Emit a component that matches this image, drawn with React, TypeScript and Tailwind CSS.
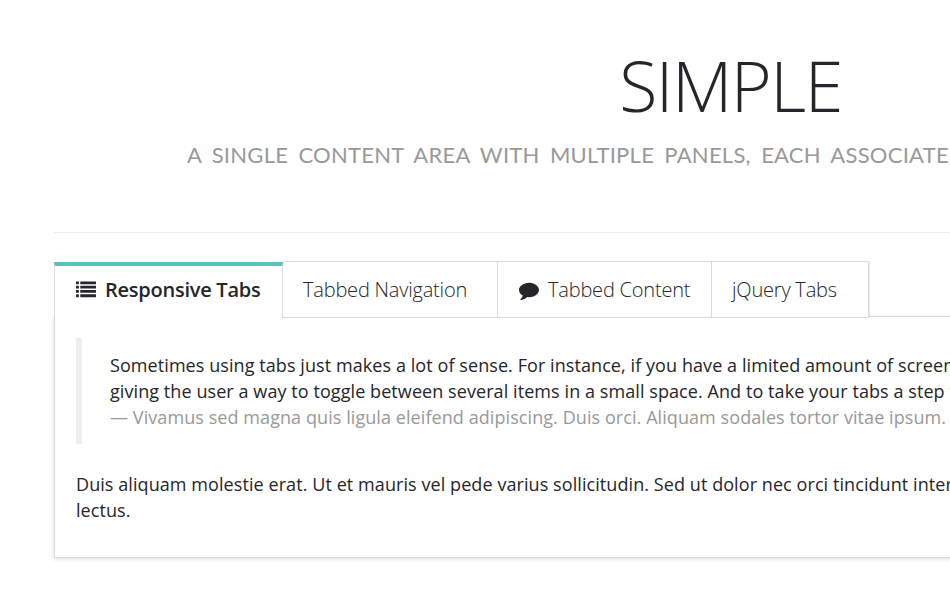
import type { ReactNode } from "react";

function ListIcon() {
  return (
    <svg viewBox="0 0 1792 1792" className="mr-[9px] size-5 shrink-0" fill="currentColor">
      {[128, 512, 896, 1280].map((y) => (
        <g key={y}>
          <rect x="0" y={y} width="256" height="256" rx="32" />
          <rect x="384" y={y} width="1408" height="256" rx="32" />
        </g>
      ))}
    </svg>
  );
}

function CommentIcon() {
  return (
    <svg viewBox="0 0 1792 1792" className="mr-[9px] size-5 shrink-0" fill="currentColor">
      <path d="M1792 896q0 174-120 321.5t-326 233-450 85.5q-70 0-145-8-198 175-460 242-49 14-114 22-17 2-30.5-9t-17.5-29v-1q-3-4-.5-12t2-10 4.5-9.5l6-9 7-8.5 8-9q7-8 31-34.5t34.5-38 31-39.5 32.5-51 27-59 26-76q-157-89-247.5-220t-90.5-281q0-130 71-248.5t191-204.5 286-136.5 348-50.5q244 0 450 85.5t326 233 120 321.5z" />
    </svg>
  );
}

function Tab({ className, children }: { className: string; children: ReactNode }) {
  return (
    <li className={`flex h-[57px] items-center border border-[#d9dbdc] bg-white text-xl font-light tracking-[-0.2px] ${className}`}>
      {children}
    </li>
  );
}

export default function App() {
  return (
    <div className="h-[600px] w-[950px] overflow-hidden bg-white font-['Open_Sans',sans-serif] text-[#25262a]">
      <div className="ml-[54px] w-[1354px]">
        <header className="h-[233px] border-b border-[#eee] pt-[37px]">
          <h1 className="pr-px text-center text-[70px] leading-[96px] font-light tracking-[-1.5px]">SIMPLE</h1>
          <p className="mt-1.5 pl-[133px] font-['Lato',sans-serif] text-[22px] leading-8 tracking-[0.25px] whitespace-nowrap text-[#999] uppercase [word-spacing:4.4px]">
            A single content area with multiple panels, each associate
          </p>
        </header>

        <ul className="relative z-10 mt-7 flex w-[815px] items-start shadow-[2px_0_1px_-1px_rgba(0,0,0,0.07)]">
          <li className="z-10 mt-px flex h-14 w-[229px] items-center border-x border-t-4 border-x-[#dddfe0] border-t-[#54c4b9] bg-white pb-1 pl-[21px] text-xl font-semibold tracking-[-0.25px] whitespace-nowrap">
            <ListIcon />
            Responsive Tabs
          </li>
          <Tab className="-ml-px w-[216px] pl-5">Tabbed Navigation</Tab>
          <Tab className="-ml-px w-[215px] pl-[21px]">
            <CommentIcon />
            Tabbed Content
          </Tab>
          <Tab className="-ml-px w-[158px] pl-5">jQuery Tabs</Tab>
        </ul>

        <section className="-mt-0.5 border border-[#d9dbdc] px-[21px] pt-[21px] pb-[34px] text-lg leading-[26px] tracking-[0.075px] whitespace-nowrap shadow-[0_1px_4px_rgba(0,0,0,0.15)]">
          <blockquote className="border-l-[6px] border-[#eee] py-3.5 pl-7">
            <p>
              Sometimes using tabs just makes a lot of sense. For instance, if you have a limited amount of screen
              <br />
              giving the user a way to toggle between several items in a small space. And to take your tabs a step f
            </p>
            <small className="block text-lg leading-[26px] text-[#999]">
              — Vivamus sed magna quis ligula eleifend adipiscing. Duis orci. Aliquam sodales tortor vitae ipsum.
            </small>
          </blockquote>
          <p className="mt-[27px]">
            Duis aliquam molestie erat. Ut et mauris vel pede varius sollicitudin. Sed ut dolor nec orci tincidunt inter
            <br />
            lectus.
          </p>
        </section>
      </div>
    </div>
  );
}
